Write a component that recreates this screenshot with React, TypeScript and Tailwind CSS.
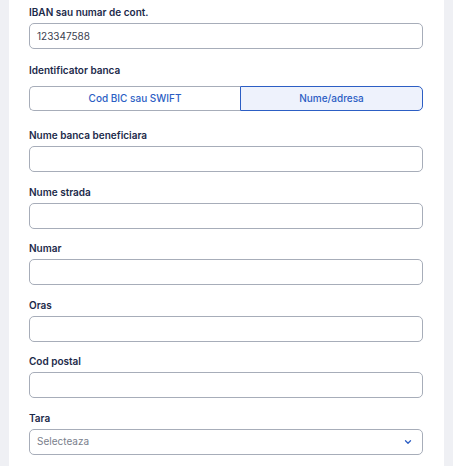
import React, { useState } from 'react';

const fields = ['Nume banca beneficiara', 'Nume strada', 'Numar', 'Oras', 'Cod postal'];

function Label({ children }: { children: React.ReactNode }) {
  return <div className="h-[14px] text-[10px] leading-[14px] font-semibold text-[#1c2a4a]">{children}</div>;
}

function TextInput({ value }: { value?: string }) {
  return (
    <div className="mt-[4px] h-[26px] rounded-[5px] border border-[#a7adb9] bg-white px-[7px] flex items-center text-[10px] text-[#3b4150]">
      {value}
    </div>
  );
}

export default function App() {
  const [tab, setTab] = useState<'bic' | 'nume'>('nume');

  return (
    <div className="w-[453px] h-[466px] bg-[#eff0f4] overflow-hidden" style={{ fontFamily: 'Inter, "Noto Sans", sans-serif' }}>
      <div className="ml-[9px] w-[435px] h-full bg-white pl-[20px] pr-[21px] pt-[5px]">
        {/* IBAN */}
        <Label>IBAN sau numar de cont.</Label>
        <TextInput value="123347588" />

        {/* Identificator banca */}
        <div className="mt-[14px]">
          <Label>Identificator banca</Label>
        </div>
        <div className="mt-[9px] flex h-[25px]">
          <button
            onClick={() => setTab('bic')}
            className={`w-[211px] rounded-l-[5px] border text-[10px] font-medium text-[#2c5ec4] ${
              tab === 'bic' ? 'border-[#2c5ec4] bg-[#eef2fc]' : 'border-[#a7adb9] border-r-0 bg-white'
            }`}
          >
            Cod BIC sau SWIFT
          </button>
          <button
            onClick={() => setTab('nume')}
            className={`flex-1 rounded-r-[5px] border text-[10px] font-medium text-[#2c5ec4] ${
              tab === 'nume' ? 'border-[#2c5ec4] bg-[#eef2fc]' : 'border-[#a7adb9] border-l-0 bg-white'
            }`}
          >
            Nume/adresa
          </button>
        </div>

        {fields.map((f, i) => (
          <div key={f} className={i === 0 ? 'mt-[17px]' : 'mt-[12.5px]'}>
            <Label>{f}</Label>
            <TextInput />
          </div>
        ))}

        {/* Tara */}
        <div className="mt-[12.5px]">
          <Label>Tara</Label>
          <div className="mt-[4px] h-[26px] rounded-[5px] border border-[#a7adb9] bg-white pl-[7px] pr-[10px] flex items-center justify-between text-[10px] text-[#7a808c]">
            <span>Selecteaza</span>
            <svg width="8" height="6" viewBox="0 0 8 6" fill="none">
              <path d="M1.5 1.8 L4 4.2 L6.5 1.8" stroke="#2c5ec4" strokeWidth="1.3" strokeLinecap="round" strokeLinejoin="round" />
            </svg>
          </div>
        </div>
      </div>
    </div>
  );
}
